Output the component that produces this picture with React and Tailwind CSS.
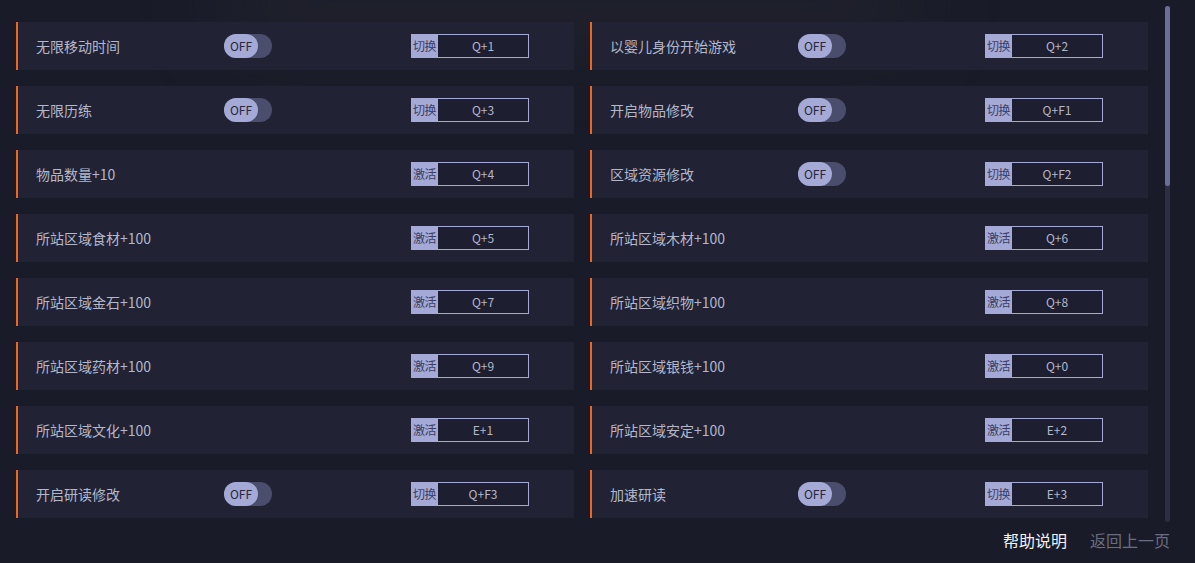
import React from 'react';

const LEFT = [
  { name: '无限移动时间', toggle: true, mode: '切换', key: 'Q+1' },
  { name: '无限历练', toggle: true, mode: '切换', key: 'Q+3' },
  { name: '物品数量+10', toggle: false, mode: '激活', key: 'Q+4' },
  { name: '所站区域食材+100', toggle: false, mode: '激活', key: 'Q+5' },
  { name: '所站区域金石+100', toggle: false, mode: '激活', key: 'Q+7' },
  { name: '所站区域药材+100', toggle: false, mode: '激活', key: 'Q+9' },
  { name: '所站区域文化+100', toggle: false, mode: '激活', key: 'E+1' },
  { name: '开启研读修改', toggle: true, mode: '切换', key: 'Q+F3' },
];

const RIGHT = [
  { name: '以婴儿身份开始游戏', toggle: true, mode: '切换', key: 'Q+2' },
  { name: '开启物品修改', toggle: true, mode: '切换', key: 'Q+F1' },
  { name: '区域资源修改', toggle: true, mode: '切换', key: 'Q+F2' },
  { name: '所站区域木材+100', toggle: false, mode: '激活', key: 'Q+6' },
  { name: '所站区域织物+100', toggle: false, mode: '激活', key: 'Q+8' },
  { name: '所站区域银钱+100', toggle: false, mode: '激活', key: 'Q+0' },
  { name: '所站区域安定+100', toggle: false, mode: '激活', key: 'E+2' },
  { name: '加速研读', toggle: true, mode: '切换', key: 'E+3' },
];

const Toggle = () => (
  <div className="w-[48px] h-[24px] rounded-full bg-[#4a4e6c] flex items-center">
    <div className="w-[34px] h-[24px] rounded-full bg-[#a4a9d6] flex items-center justify-center text-[12px] text-[#262840]">
      OFF
    </div>
  </div>
);

const Row = ({ item }) => (
  <div className="h-[48px] bg-[#212334] border-l-2 border-[#f0641e] flex items-center">
    <div className="w-[206px] pl-[18px] text-[14px] text-[#b4b7ca] whitespace-nowrap">{item.name}</div>
    <div className="w-[187px] flex">
      {item.toggle && <Toggle />}
    </div>
    <div className="flex h-[24px]">
      <div className="w-[27px] bg-[#a4a9d6] text-[12px] text-[#3d4060] flex items-center justify-center tracking-[-0.5px]">
        {item.mode}
      </div>
      <div className="w-[91px] border border-[#a4a9d6] border-l-0 bg-[#1d1f30] text-[12px] text-[#b4b7ca] flex items-center justify-center">
        {item.key}
      </div>
    </div>
  </div>
);

export default function App() {
  return (
    <div
      className="w-[1195px] h-[563px] bg-[#191b28] relative overflow-hidden"
      style={{ fontFamily: '"Noto Sans CJK SC", "Noto Sans", sans-serif' }}
    >
      <div className="absolute left-[220px] top-[-30px] w-[700px] h-[70px] rounded-full bg-[#2a2a34] blur-2xl opacity-50 pointer-events-none" />
      <div className="relative flex pt-[22px] pl-[16px]">
        <div className="w-[558px] flex flex-col gap-[16px]">
          {LEFT.map((it) => <Row key={it.name} item={it} />)}
        </div>
        <div className="w-[558px] ml-[16px] flex flex-col gap-[16px]">
          {RIGHT.map((it) => <Row key={it.name} item={it} />)}
        </div>
      </div>
      <div className="absolute left-[1165px] top-[6px] w-[5px] h-[516px] rounded-full bg-[#2c2e43]">
        <div className="w-[5px] h-[180px] rounded-full bg-[#6c6f94]" />
      </div>
      <div className="absolute right-[25px] top-[528px] flex gap-[23px] text-[16px]">
        <span className="text-[#f2f2f5]">帮助说明</span>
        <span className="text-[#6a6d80]">返回上一页</span>
      </div>
    </div>
  );
}
